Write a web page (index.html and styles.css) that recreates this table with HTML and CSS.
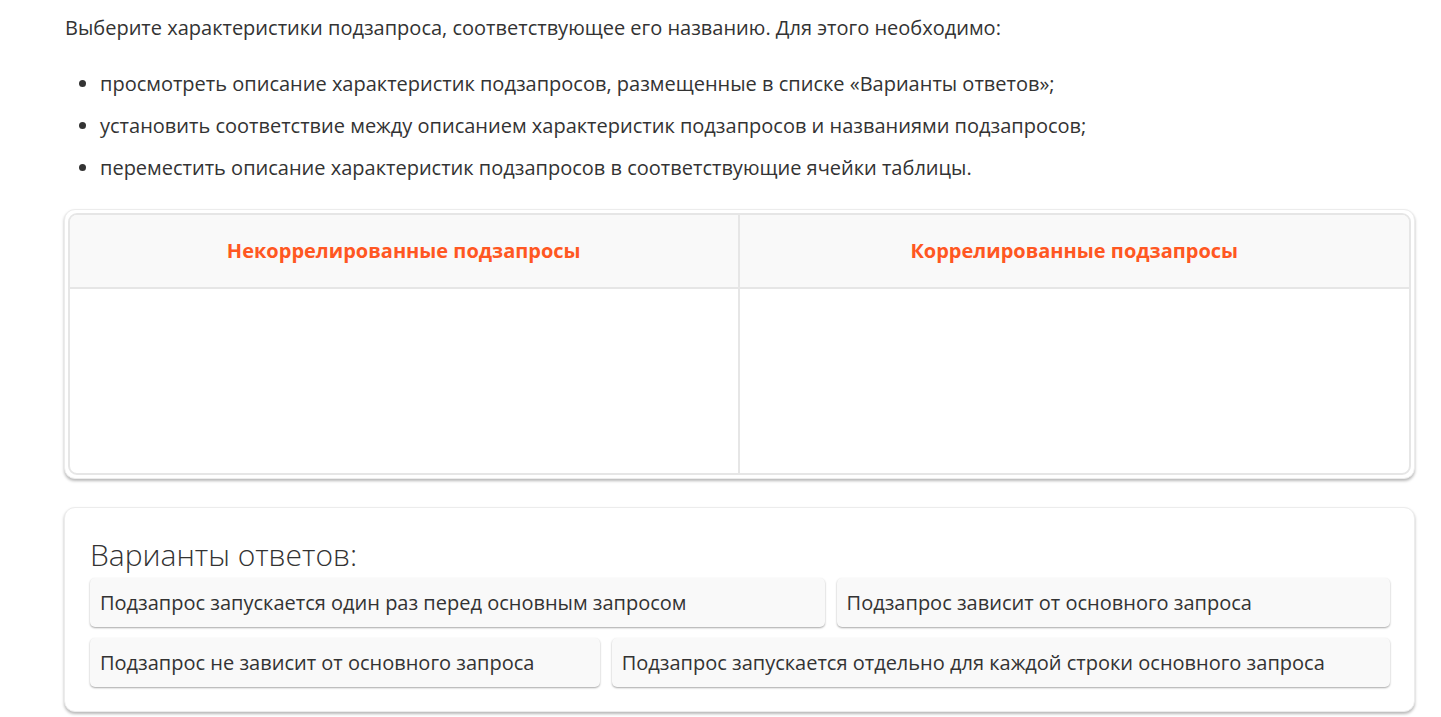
FILE: index.html
```html
<!DOCTYPE html>
<html lang="ru">
<head>
<meta charset="utf-8">
<title>Задание</title>
<link rel="stylesheet" href="styles.css">
</head>
<body>
<main class="page">
  <p class="intro">Выберите характеристики подзапроса, соответствующее его названию. Для этого необходимо:</p>
  <ul class="steps">
    <li>просмотреть описание характеристик подзапросов, размещенные в списке «Варианты ответов»;</li>
    <li>установить соответствие между описанием характеристик подзапросов и названиями подзапросов;</li>
    <li>переместить описание характеристик подзапросов в соответствующие ячейки таблицы.</li>
  </ul>

  <section class="card table-card">
    <div class="match-table">
      <div class="cell head">Некоррелированные подзапросы</div>
      <div class="cell head">Коррелированные подзапросы</div>
      <div class="cell drop"></div>
      <div class="cell drop"></div>
    </div>
  </section>

  <section class="card answers">
    <h2 class="answers-title">Варианты ответов:</h2>
    <div class="options">
      <div class="option">Подзапрос запускается один раз перед основным запросом</div>
      <div class="option">Подзапрос зависит от основного запроса</div>
      <div class="option">Подзапрос не зависит от основного запроса</div>
      <div class="option">Подзапрос запускается отдельно для каждой строки основного запроса</div>
    </div>
  </section>
</main>
</body>
</html>
```

FILE: styles.css
```css
* { box-sizing: border-box; }

html, body {
  margin: 0;
  padding: 0;
  background: #ffffff;
}

body {
  font-family: "Open Sans", "Liberation Sans", sans-serif;
  font-size: 20px;
  line-height: 27px;
  color: #333333;
}

.page {
  width: 1351px;
  margin-left: 64px;
  padding-top: 14px;
  padding-bottom: 5px;
}

.intro {
  margin: 0 0 0 1px;
}

.steps {
  margin: 29px 0 0 0;
  padding-left: 36px;
}

.steps li {
  margin-bottom: 15px;
}

.steps li:last-child {
  margin-bottom: 0;
}

.card {
  background: #ffffff;
  border: 1px solid #ececec;
  border-radius: 11px;
  box-shadow: 0 2px 3px rgba(0, 0, 0, 0.28);
}

.table-card {
  margin-top: 28px;
  padding: 3px;
}

.match-table {
  display: grid;
  grid-template-columns: 1fr 1fr;
  grid-template-rows: 74px 184px;
  border: 2px solid #e6e6e6;
  border-radius: 9px;
  overflow: hidden;
}

.cell {
  border-right: 2px solid #e6e6e6;
}

.cell:nth-child(2n) {
  border-right: none;
}

.head {
  background: #f9f9f9;
  border-bottom: 2px solid #e6e6e6;
  color: #ff5722;
  font-weight: 700;
  display: flex;
  align-items: center;
  justify-content: center;
  padding-bottom: 1px;
}

.answers {
  margin-top: 28px;
  padding: 27px 24px 24px 25px;
}

.answers-title {
  margin: 0 0 3px 0;
  font-size: 30px;
  line-height: 40px;
  font-weight: 300;
  color: #333333;
}

.options {
  display: flex;
  flex-wrap: wrap;
  gap: 11px 12px;
}

.option {
  flex: 1 1 auto;
  background: #f9f9f9;
  border-radius: 5px;
  padding: 11px 10px;
  line-height: 27px;
  box-shadow: 0 1px 2px rgba(0, 0, 0, 0.35);
  white-space: nowrap;
}
```
